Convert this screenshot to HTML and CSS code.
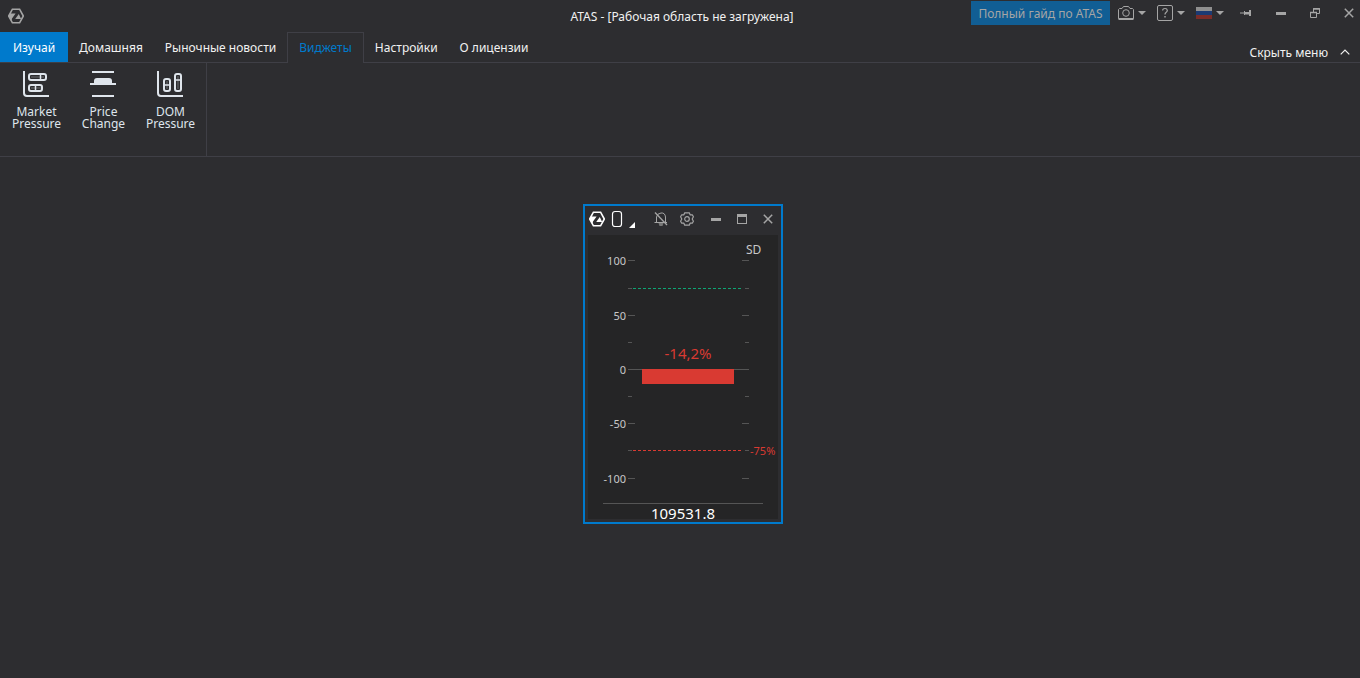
FILE: index.html
```html
<!DOCTYPE html>
<html lang="ru">
<head>
    <meta charset="UTF-8">
    <meta name="viewport" content="width=device-width, initial-scale=1.0">
    <title>ATAS</title>
    <link rel="stylesheet" href="styles.css">
</head>
<body>
    <svg width="0" height="0" class="symbols" aria-hidden="true">
        <symbol id="logo" viewBox="0 0 16 16">
            <path d="M4.4 1.2h7.2L15.3 8l-3.7 6.8H4.4L.7 8z" fill="none" stroke="currentColor" stroke-width="1.6"/>
            <path d="M.7 8 2.2 5.6h5.4L4 10.4 3.4 12.4z" fill="currentColor"/>
            <path d="M10.8 6 13.2 11H7.2z" fill="currentColor"/>
        </symbol>
        <symbol id="caret" viewBox="0 0 8 4"><path d="M0 0h8L4 4z" fill="currentColor"/></symbol>
        <symbol id="close" viewBox="0 0 10 10"><path d="M.8.8l8.4 8.4M9.2.8L.8 9.2" stroke="currentColor" stroke-width="1.5"/></symbol>
        <symbol id="minimize" viewBox="0 0 10 10"><path d="M0 4h10v3H0z" fill="currentColor"/></symbol>
    </svg>

    <header class="titlebar">
        <svg class="logo" width="16" height="16"><use href="#logo"/></svg>
        <h1 class="title">ATAS - [Рабочая область не загружена]</h1>
        <div class="tools">
            <button class="guide">Полный гайд по ATAS</button>
            <button class="tool" aria-label="Снимок экрана">
                <svg width="16" height="14" viewBox="0 0 16 14" fill="none" stroke="currentColor">
                    <path d="M.5 3.5 1.5 2.5H4L5.5.5h5L12 2.5h2.5l1 1v9H.5z"/>
                    <path d="M.5 13h15" stroke-width="2"/>
                    <circle cx="8" cy="7" r="3.3"/>
                </svg>
                <svg width="8" height="4"><use href="#caret"/></svg>
            </button>
            <button class="tool" aria-label="Помощь">
                <svg width="16" height="16" viewBox="0 0 16 16" fill="none" stroke="currentColor">
                    <rect x=".5" y=".5" width="15" height="15" rx="1.5"/>
                    <path d="M5.7 5.5V4.8Q5.9 3.5 8 3.5T10.3 5.4Q10.3 6.5 9 7.4 8 8.1 8 9.5" stroke-width="1.2"/>
                    <path d="M7.3 11h1.4v1.5H7.3z" fill="currentColor" stroke="none"/>
                </svg>
                <svg width="8" height="4"><use href="#caret"/></svg>
            </button>
            <button class="tool" aria-label="Язык">
                <svg width="16" height="12" viewBox="0 0 16 12">
                    <path d="M0 0h16v4H0z" fill="#8f8f8f"/>
                    <path d="M0 4h16v4H0z" fill="#1b3a73"/>
                    <path d="M0 8h16v4H0z" fill="#7b2c28"/>
                </svg>
                <svg width="8" height="4"><use href="#caret"/></svg>
            </button>
            <div class="window-buttons">
                <button aria-label="Закрепить">
                    <svg width="12" height="8" viewBox="0 0 12 8" fill="currentColor">
                        <path d="M0 3.5h4v1H0zM4 2h1v1h4V1h2v6H9V5.5H5V6H4z"/>
                    </svg>
                </button>
                <button aria-label="Свернуть"><svg width="10" height="10"><use href="#minimize"/></svg></button>
                <button aria-label="Восстановить">
                    <svg width="10" height="10" viewBox="0 0 10 10" fill="none" stroke="currentColor">
                        <path d="M.5 4.5h6v5h-6zM3.5 4.5v-4h6v5h-3"/>
                        <path d="M3 1h7M0 4.5h7" stroke-width="1.4"/>
                    </svg>
                </button>
                <button aria-label="Закрыть"><svg width="10" height="10"><use href="#close"/></svg></button>
            </div>
        </div>
    </header>

    <nav class="tabs">
        <a href="#" class="tab learn">Изучай</a>
        <a href="#" class="tab">Домашняя</a>
        <a href="#" class="tab">Рыночные новости</a>
        <a href="#" class="tab active">Виджеты</a>
        <a href="#" class="tab">Настройки</a>
        <a href="#" class="tab">О лицензии</a>
        <button class="hide-menu">
            Скрыть меню
            <svg width="10" height="6" viewBox="0 0 10 6"><path d="M.7 5.3 5 1l4.3 4.3" fill="none" stroke="currentColor" stroke-width="1.2"/></svg>
        </button>
    </nav>

    <section class="ribbon">
        <div class="group">
            <button class="item">
                <svg width="28" height="28" viewBox="1 0 28 28" fill="none" stroke="currentColor" stroke-width="2">
                    <path d="M2 1v22q0 3 3 3h22"/>
                    <rect x="7" y="4" width="17" height="6" rx="2"/>
                    <rect x="7" y="15" width="13" height="6" rx="2"/>
                    <path d="M18.5 4v6M13.5 15v6" stroke-width="1.5"/>
                    <path d="M9 7h13M9 18h10" stroke-width="1" opacity=".35"/>
                </svg>
                <span>Market<br>Pressure</span>
            </button>
            <button class="item">
                <svg width="28" height="28" viewBox="1 0 28 28" fill="none" stroke="currentColor" stroke-width="2">
                    <path d="M3 2h22M1 14h26M3 26h22"/>
                    <path d="M5 14V11q0-3 3-3h12q3 0 3 3v3z" fill="currentColor" stroke="none"/>
                </svg>
                <span>Price<br>Change</span>
            </button>
            <button class="item">
                <svg width="28" height="28" viewBox="1 0 28 28" fill="none" stroke="currentColor" stroke-width="2">
                    <path d="M2 1v22q0 3 3 3h22"/>
                    <rect x="8" y="9" width="6" height="12" rx="2"/>
                    <rect x="19" y="4" width="6" height="17" rx="2"/>
                    <path d="M8 15h6M19 10h6" stroke-width="1.5"/>
                    <path d="M11 11v8M22 6v13" stroke-width="1" opacity=".35"/>
                </svg>
                <span>DOM<br>Pressure</span>
            </button>
        </div>
    </section>

    <main class="workspace">
        <section class="widget">
            <header class="widget-bar">
                <svg class="widget-logo" width="16" height="16"><use href="#logo"/></svg>
                <button class="link-color" aria-label="Группа">
                    <svg width="26" height="18" viewBox="0 0 26 18">
                        <rect x="1.5" y="1.5" width="9" height="15" rx="2.5" fill="none" stroke="currentColor" stroke-width="1.2"/>
                        <path d="M24 12v6h-6z" fill="currentColor"/>
                    </svg>
                </button>
                <button class="bell" aria-label="Оповещения">
                    <svg width="14" height="14" viewBox="0 0 14 14" fill="none" stroke="currentColor">
                        <path d="M2.5 10.5V5Q3 1.5 7 1t4.5 4v5.5M.5 10.5h12.5" />
                        <path d="M4.5 11h5l-1 3h-3z" fill="#777" stroke="none"/>
                        <path d="M1 .5 13 13" stroke-width="1.3"/>
                    </svg>
                </button>
                <button class="settings" aria-label="Параметры">
                    <svg width="14" height="14" viewBox="0 0 14 14" fill="none" stroke="currentColor" stroke-width="1.2">
                        <path d="M4.7.8h4.6l.8 2h2.2l1.1 2L12.2 7l1.2 2.2-1.1 2h-2.2l-.8 2H4.7l-.8-2H1.7l-1.1-2L1.8 7 .6 4.8l1.1-2h2.2z" stroke-linejoin="round"/>
                        <circle cx="7" cy="7" r="2.3"/>
                    </svg>
                </button>
                <button aria-label="Свернуть"><svg width="10" height="10"><use href="#minimize"/></svg></button>
                <button aria-label="Развернуть">
                    <svg width="10" height="10" viewBox="0 0 10 10"><path d="M0 0h10v10H0zM1 3v6h8V3z" fill="currentColor" fill-rule="evenodd"/></svg>
                </button>
                <button aria-label="Закрыть"><svg width="10" height="10"><use href="#close"/></svg></button>
            </header>
            <svg class="chart" viewBox="0 0 190 284">
                <!-- scale -->
                <g class="labels">
                    <text x="38" y="30">100</text>
                    <text x="38" y="85">50</text>
                    <text x="38" y="139">0</text>
                    <text x="38" y="193">-50</text>
                    <text x="38" y="248">-100</text>
                </g>
                <path class="ticks" d="M40 25.5h7m107 0h7M40 80.5h7m107 0h7M40 134.5h121M40 188.5h7m107 0h7M40 243.5h7m107 0h7"/>
                <path class="ticks" d="M40 53.5h4m113 0h4M40 107.5h4m113 0h4M40 161.5h4m113 0h4M40 215.5h4m113 0h4"/>
                <!-- alert levels -->
                <path class="level up" d="M45 53.5h109"/>
                <path class="level down" d="M45 215.5h109"/>
                <text class="level-label" x="162" y="220">-75%</text>
                <text class="mode" x="158" y="19">SD</text>
                <!-- value -->
                <text class="percent" x="100" y="124">-14,2%</text>
                <rect class="bar" x="54" y="134" width="92" height="15"/>
                <path class="ticks" d="M15 268.5h160"/>
                <text class="price" x="95" y="284">109531.8</text>
            </svg>
        </section>
    </main>
</body>
</html>
```
FILE: styles.css
```css
* {
    box-sizing: border-box;
}
body, html {
    margin: 0;
    padding: 0;
    height: 100%;
}
body {
    display: flex;
    flex-direction: column;
    background-color: #2d2d30;
    color: #f1f1f1;
    font-family: "Noto Sans", "Open Sans", sans-serif;
    font-size: 12px;
    overflow: hidden;
}
button {
    display: flex;
    align-items: center;
    justify-content: center;
    flex: none;
    padding: 0;
    border: none;
    background: none;
    color: inherit;
    font: inherit;
    cursor: pointer;
}
svg {
    display: block;
    flex: none;
}
.symbols {
    position: absolute;
}

/* title bar */
.titlebar {
    display: grid;
    grid-template-columns: 1fr auto 1fr;
    align-items: center;
    height: 32px;
    padding: 0 4px 0 8px;
}
.logo {
    color: #a5a5a5;
}
.title {
    margin: 0;
    font-size: 12px;
    font-weight: normal;
    white-space: nowrap;
}
.tools {
    display: flex;
    align-items: center;
    justify-content: flex-end;
    gap: 11px;
    height: 26px;
    align-self: start;
    color: #a5a5a5;
}
.guide {
    width: 139px;
    height: 24px;
    margin-right: -3px;
    background: #115e94;
    white-space: nowrap;
}
.tool {
    gap: 4px;
    height: 24px;
}
.window-buttons {
    display: flex;
}
.window-buttons button {
    width: 34px;
    height: 24px;
}
.window-buttons button:first-child {
    width: 36px;
    margin-left: -7px;
}
.window-buttons button:last-child {
    width: 24px;
    padding-left: 10px;
}

/* ribbon */
.tabs {
    display: flex;
    height: 31px;
    border-bottom: 1px solid #3f3f46;
}
.tab {
    padding: 0 11px;
    line-height: 31px;
    color: #f1f1f1;
    text-decoration: none;
    white-space: nowrap;
}
.learn {
    padding: 0 13px;
    background: #007acc;
    color: #fff;
}
.active {
    height: 31px;
    border: 1px solid #3f3f46;
    border-bottom: none;
    background: #2d2d30;
    line-height: 30px;
    color: #007acc;
}
.hide-menu {
    gap: 12px;
    margin-left: auto;
    padding: 10px 10px 0 0;
}
.ribbon {
    display: flex;
    height: 94px;
    border-bottom: 1px solid #3f3f46;
}
.group {
    display: flex;
    padding: 7px 2px 0 3px;
    border-right: 1px solid #3f3f46;
}
.item {
    flex-direction: column;
    justify-content: flex-start;
    gap: 8px;
    width: 67px;
    color: #dfe5ec;
    line-height: 12px;
}

/* workspace */
.workspace {
    position: relative;
    flex: 1;
}
.widget {
    position: absolute;
    left: 583px;
    top: 47px;
    width: 200px;
    padding: 0 3px 3px;
    border: 2px solid #007acc;
}
.widget-bar {
    display: flex;
    align-items: center;
    height: 29px;
    padding-bottom: 3px;
    color: #a5a5a5;
}
.widget-bar button {
    width: 26px;
    height: 26px;
}
.widget-logo {
    margin-left: 1px;
    color: #fff;
}
.widget-bar .link-color {
    width: 30px;
    margin-left: 6px;
    justify-content: flex-start;
    color: #fff;
}
.bell {
    margin-left: 7px;
}
.settings {
    margin-right: 3px;
}
.chart {
    width: 100%;
    background: #252526;
}
.labels {
    fill: #c8c8c8;
    font-size: 11px;
    text-anchor: end;
}
.ticks {
    stroke: #555;
}
.level {
    stroke-dasharray: 3 2;
}
.up {
    stroke: #0fa573;
}
.down {
    stroke: #d93a32;
}
.level-label {
    fill: #d93a32;
    font-size: 11px;
}
.mode {
    fill: #c8c8c8;
}
.percent, .price {
    font-size: 15px;
    text-anchor: middle;
}
.percent, .bar {
    fill: #d93a32;
}
.price {
    fill: #fff;
}
```
